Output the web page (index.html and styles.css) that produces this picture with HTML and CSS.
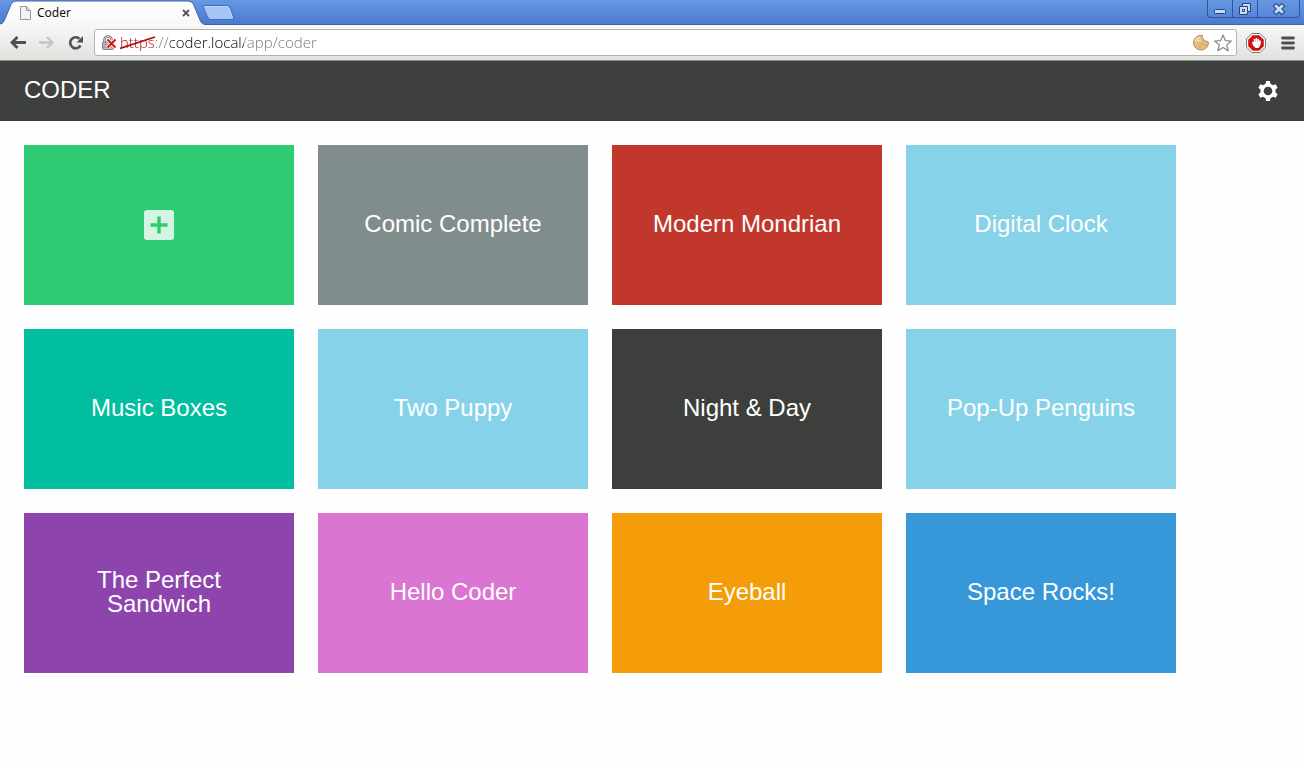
FILE: index.html
```html
<!DOCTYPE html>
<html lang="en">
<head>
<meta charset="utf-8">
<title>Coder</title>
<link rel="stylesheet" href="styles.css">
</head>
<body>
<div class="titlebar">
  <div class="tab">
    <svg class="tab-shape" viewBox="0 0 208 25" aria-hidden="true">
      <defs><linearGradient id="tabfill" x1="0" y1="0" x2="0" y2="1"><stop offset="0" stop-color="#fff"/><stop offset="1" stop-color="#f7f8f6"/></linearGradient></defs>
      <path d="M0 25V24Q3 24 4.500 20L11 4.500Q12.500 1 16 1H188Q192 1 193.500 4.500L200 20Q201.500 24.500 206 24.500V25Z" fill="url(#tabfill)"/>
      <path d="M0 24Q3 24 4.500 20L11 4.500Q12.500 1 16 1H188Q192 1 193.500 4.500L200 20Q201.500 24.500 206 24.500H208" fill="none" stroke="#3e64a8"/>
    </svg>
    <svg class="page-icon" viewBox="0 0 11 14" aria-hidden="true"><path d="M.5 .5H6.500L10.500 4.500V13.500H.5Z" fill="#f1f3f3" stroke="#999"/><path d="M6.500 .5V4.500H10.500" fill="#ddd" stroke="#999"/></svg>
    <span class="tab-title">Coder</span>
    <button class="tab-close" aria-label="Close tab"><svg viewBox="0 0 8 8"><path d="M1 1L7 7M7 1L1 7" stroke="#555" stroke-width="1.800"/></svg></button>
  </div>
  <button class="new-tab" aria-label="New tab"><svg viewBox="0 0 33 16"><path d="M3 .5H24Q27 .5 28 3L31.500 12.500Q32 14.500 30 14.500H9Q6.500 14.500 5.500 12L1.500 2.500Q1 .5 3 .5Z" fill="#a5c4f3" stroke="#416cb9"/><path d="M3 1.500H24Q26.500 1.500 27.300 4L30.500 13" fill="none" stroke="#c3d9fa"/></svg></button>
  <div class="window-controls">
    <button class="win win-min" aria-label="Minimize"><svg viewBox="0 0 14 14"><rect x="1.500" y="7.500" width="11" height="4" rx="1" fill="#c8dcfa" stroke="#24447e"/></svg></button>
    <button class="win win-max" aria-label="Restore"><svg viewBox="0 0 14 14"><path d="M4.500 1.500H12.500V9.500H9.500V12.500H1.500V4.500H4.500Z" fill="#c8dcfa" stroke="#24447e"/><path d="M4.500 4.500H9.500V9.500M4.500 7.500H6.500V9.500H4.500Z" fill="none" stroke="#24447e"/></svg></button>
    <button class="win win-close" aria-label="Close"><svg viewBox="0 0 14 14"><path d="M2.500 2.500L11.500 11.500M11.500 2.500L2.500 11.500" stroke="#24447e" stroke-width="5"/><path d="M3.200 3.200L10.800 10.800M10.800 3.200L3.200 10.800" stroke="#c8dcfa" stroke-width="3"/></svg></button>
  </div>
</div>
<div class="toolbar">
  <button class="nav" aria-label="Back"><svg viewBox="0 0 16 14"><path d="M16 6.500H3M7.500 1L2 6.500L7.500 12" fill="none" stroke="#505050" stroke-width="2.800"/></svg></button>
  <button class="nav" aria-label="Forward" disabled><svg viewBox="0 0 16 14"><path d="M0 6.500H13M8 1L13.500 6.500L8 12" fill="none" stroke="#c4c4c4" stroke-width="2.400"/></svg></button>
  <button class="nav" aria-label="Reload"><svg viewBox="0 0 16 14"><path d="M12.500 9.500A5.500 5.500 0 1 1 11.500 2.800" fill="none" stroke="#505050" stroke-width="2.600"/><path d="M15 0V6.500H8.500Z" fill="#505050"/></svg></button>
  <div class="omnibox">
    <svg class="lock" viewBox="0 0 16 16" aria-hidden="true"><path d="M3.500 8V5A3.500 3.500 0 0 1 10.500 5V8" fill="none" stroke="#777" stroke-width="2.600"/><path d="M3.500 8V5A3.500 3.500 0 0 1 10.500 5V8" fill="none" stroke="#d8d8d8" stroke-width="1"/><rect x="1.500" y="7" width="11" height="7.500" rx="1" fill="#bbb" stroke="#828282"/><path d="M2 9.500H12M2 12H12" stroke="#999"/><path d="M6.500 4.500L14.500 12.500M14.500 4.500L6.500 12.500" stroke="#fff" stroke-width="3.600"/><path d="M6.500 4.500L14.500 12.500M14.500 4.500L6.500 12.500" stroke="#d8150f" stroke-width="2"/></svg>
    <div class="address">
      <input class="url" type="text" aria-label="Address" value="https://coder.local/app/coder" spellcheck="false">
      <svg class="strike" viewBox="0 0 36 14" aria-hidden="true"><path d="M0 12.500L35 1" stroke="#b00c0c" stroke-width="1.800"/></svg>
    </div>
    <button class="mini" aria-label="Cookies"><svg viewBox="0 0 18 18"><path d="M10.500 1.500Q9.500 4 11.500 4.800Q11.500 7.500 14 7.200Q16 6.500 16.500 9A7.500 7.300 0 1 1 10.500 1.500Z" fill="#e3bd83" stroke="#b58a50"/><path d="M3.500 7Q4.500 4 8 3.700M4.500 9Q6 6 9 6.500" fill="none" stroke="#f3dcb2" stroke-width="1.800"/><path d="M5.500 8.500h1M9.500 10h1M7.500 13h1M12.500 11.500h1" stroke="#99703c" stroke-width="1.200"/></svg></button>
    <button class="mini star" aria-label="Bookmark"><svg viewBox="0 0 18 18"><path d="M9 1L11.300 6.600L17.300 7L12.700 10.900L14.200 16.800L9 13.600L3.800 16.800L5.300 10.900L.7 7L6.700 6.600Z" fill="#fff" stroke="#858585" stroke-width="1.200" stroke-linejoin="round"/></svg></button>
  </div>
  <button class="ext" aria-label="Ad blocker"><svg viewBox="0 0 20 20"><path d="M6 .5H14L19.500 6V14L14 19.500H6L.5 14V6Z" fill="#fff" stroke="#777"/><path d="M6.800 2.200H13.200L17.800 6.800V13.200L13.200 17.800H6.800L2.200 13.200V6.800Z" fill="#d20f12"/><path d="M6.800 9.500L8 12.500M8.500 10V6.500M10.400 10V5.500M12.300 10V6.500M13.900 10V8" fill="none" stroke="#fff" stroke-width="1.600" stroke-linecap="round"/><path d="M7.500 9H14.500V12L12.500 15H9.500L7.200 12Z" fill="#fff"/></svg></button>
  <button class="menu" aria-label="Menu"><svg viewBox="0 0 14 14"><path d="M1.500 2H12.500M1.500 7H12.500M1.500 12H12.500" stroke="#505050" stroke-width="2.800" stroke-linecap="round"/></svg></button>
</div>
<header class="header">
  <h1 class="brand">CODER</h1>
  <button class="settings" aria-label="Settings"><svg viewBox="0 0 20 20"><g fill="#fff"><path id="tooth" d="M8.100 0H11.900L12.800 5V15L11.900 20H8.100L7.200 15V5Z"/><use href="#tooth" transform="rotate(60 10 10)"/><use href="#tooth" transform="rotate(120 10 10)"/><circle cx="10" cy="10" r="7.600"/></g><circle cx="10" cy="10" r="4.300" fill="#3e403d"/></svg></button>
</header>
<main class="apps">
  <button class="tile green" aria-label="Create app"><svg class="plus" viewBox="0 0 30 30"><rect width="30" height="30" rx="3" fill="#d5f4e2"/><path d="M15 6.500V23.500M6.500 15H23.500" stroke="#2ecc75" stroke-width="3.400"/></svg></button>
  <a class="tile gray" href="#">Comic Complete</a>
  <a class="tile red" href="#">Modern Mondrian</a>
  <a class="tile sky" href="#">Digital Clock</a>
  <a class="tile teal" href="#">Music Boxes</a>
  <a class="tile sky" href="#">Two Puppy</a>
  <a class="tile dark" href="#">Night &amp; Day</a>
  <a class="tile sky" href="#">Pop-Up Penguins</a>
  <a class="tile purple" href="#">The Perfect Sandwich</a>
  <a class="tile pink" href="#">Hello Coder</a>
  <a class="tile orange" href="#">Eyeball</a>
  <a class="tile blue" href="#">Space Rocks!</a>
</main>
</body>
</html>
```
FILE: styles.css
```css
* { box-sizing: border-box; }
body { margin: 0; background: #fdfefd; font-family: "Liberation Sans", Arial, sans-serif; }
button { padding: 0; border: 0; background: none; font: inherit; display: flex; align-items: center; justify-content: center; }
svg { display: block; }

.titlebar { display: flex; height: 25px; background: linear-gradient(#6698e2, #4b7ad0); border-bottom: 1px solid #3e64a8; }
.tab { position: relative; display: flex; align-items: center; width: 204px; height: 25px; padding: 1px 14px 0 20px; gap: 6px; }
.tab-shape { position: absolute; left: 0; top: 0; width: 208px; height: 25px; }
.page-icon, .tab-title, .tab-close { position: relative; }
.page-icon { width: 11px; height: 14px; }
.tab-title { flex: 1; font: 12px/16px "Noto Sans", sans-serif; color: #111; }
.tab-close { width: 8px; height: 8px; }
.tab-close svg { width: 8px; height: 8px; }
.new-tab { position: relative; width: 33px; height: 16px; margin-top: 5px; margin-left: -2px; }
.new-tab svg { width: 33px; height: 16px; }
.window-controls { display: flex; height: 18px; margin-left: auto; margin-right: 4px; border: 1px solid #315493; border-top: 0; border-radius: 0 0 4px 4px; background: linear-gradient(#6797e1, #5686d9); }
.win { width: 25px; height: 17px; border-right: 1px solid #315493; }
.win-close { width: 41px; border-right: 0; }
.win svg { width: 14px; height: 14px; }

.toolbar { display: flex; align-items: center; height: 36px; padding: 0 9px 0 9px; background: linear-gradient(#f8f9f7, #e0e1dd); border-bottom: 1px solid #8b9099; }
.nav { width: 17px; height: 28px; margin-right: 12px; }
.nav svg { width: 16px; height: 14px; }
.omnibox { display: flex; flex: 1; align-items: center; min-width: 0; height: 27px; margin-left: -2px; padding: 0 4px 0 6px; border: 1px solid #b1b3ae; border-radius: 3px; background: #fff; }
.lock { width: 16px; height: 16px; margin-right: 3px; }
.address { position: relative; flex: 1; min-width: 0; }
.url { display: block; width: 100%; height: 24px; padding: 0 0 2px; border: 0; outline: 0; font: 300 15px/22px "Open Sans", "Noto Sans", sans-serif; color: transparent; caret-color: #000; background: linear-gradient(90deg, #b00c0c 35px, #757575 35px, #757575 50px, #000 50px, #000 124px, #757575 124px); background-clip: text; -webkit-background-clip: text; }
.strike { position: absolute; left: 0; top: 5px; width: 36px; height: 14px; pointer-events: none; }
.mini { width: 18px; height: 24px; margin-left: 4px; }
.mini svg { width: 18px; height: 18px; }
.ext { width: 20px; height: 20px; margin-left: 9px; }
.ext svg { width: 20px; height: 20px; }
.menu { width: 14px; height: 14px; margin-left: 15px; }
.menu svg { width: 14px; height: 14px; }

.header { display: flex; align-items: center; justify-content: space-between; height: 60px; padding: 0 26px 0 24px; background: #3e403d; color: #fff; }
.brand { margin: 0; padding-bottom: 2px; font-size: 24px; line-height: 28px; font-weight: 400; }
.settings, .settings svg { width: 20px; height: 20px; }

.apps { display: grid; grid-template-columns: repeat(auto-fill, 270px); grid-auto-rows: 160px; gap: 24px; padding: 24px; }
.tile { display: flex; align-items: center; justify-content: center; padding: 0 24px 2px; font-size: 24px; line-height: 24px; text-align: center; text-decoration: none; color: #fff; }
.green { padding-bottom: 0; background: #2ecc75; }
.plus { width: 30px; height: 30px; }
.gray { background: #818d8d; }
.red { background: #c1372b; }
.sky { background: #86d3e9; }
.teal { background: #00be9f; }
.dark { background: #3d3f3c; }
.purple { background: #8e44ad; }
.pink { background: #da76d2; }
.orange { background: #f59c09; }
.blue { background: #3698d9; }
```
